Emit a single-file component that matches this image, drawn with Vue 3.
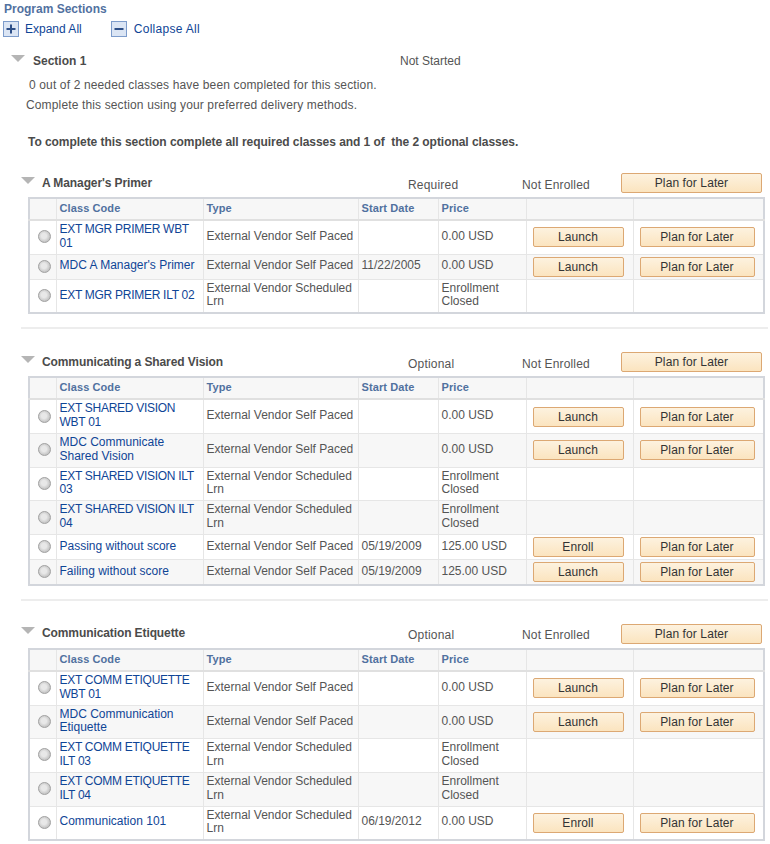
<script setup>
const blocks = [
  {
    title: "A Manager's Primer", need: 'Required',
    rows: [
      { code: 'EXT MGR PRIMER WBT 01', type: 'External Vendor Self Paced', date: '', price: '0.00 USD', action: 'Launch', plan: true },
      { code: "MDC A Manager's Primer", type: 'External Vendor Self Paced', date: '11/22/2005', price: '0.00 USD', action: 'Launch', plan: true },
      { code: 'EXT MGR PRIMER ILT 02', type: 'External Vendor Scheduled Lrn', date: '', price: 'Enrollment Closed' },
    ],
  },
  {
    title: 'Communicating a Shared Vision', need: 'Optional',
    rows: [
      { code: 'EXT SHARED VISION WBT 01', type: 'External Vendor Self Paced', date: '', price: '0.00 USD', action: 'Launch', plan: true },
      { code: 'MDC Communicate Shared Vision', type: 'External Vendor Self Paced', date: '', price: '0.00 USD', action: 'Launch', plan: true },
      { code: 'EXT SHARED VISION ILT 03', type: 'External Vendor Scheduled Lrn', date: '', price: 'Enrollment Closed' },
      { code: 'EXT SHARED VISION ILT 04', type: 'External Vendor Scheduled Lrn', date: '', price: 'Enrollment Closed' },
      { code: 'Passing without score', type: 'External Vendor Self Paced', date: '05/19/2009', price: '125.00 USD', action: 'Enroll', plan: true },
      { code: 'Failing without score', type: 'External Vendor Self Paced', date: '05/19/2009', price: '125.00 USD', action: 'Launch', plan: true },
    ],
  },
  {
    title: 'Communication Etiquette', need: 'Optional',
    rows: [
      { code: 'EXT COMM ETIQUETTE WBT 01', type: 'External Vendor Self Paced', date: '', price: '0.00 USD', action: 'Launch', plan: true },
      { code: 'MDC Communication Etiquette', type: 'External Vendor Self Paced', date: '', price: '0.00 USD', action: 'Launch', plan: true },
      { code: 'EXT COMM ETIQUETTE ILT 03', type: 'External Vendor Scheduled Lrn', date: '', price: 'Enrollment Closed' },
      { code: 'EXT COMM ETIQUETTE ILT 04', type: 'External Vendor Scheduled Lrn', date: '', price: 'Enrollment Closed' },
      { code: 'Communication 101', type: 'External Vendor Scheduled Lrn', date: '06/19/2012', price: '0.00 USD', action: 'Enroll', plan: true },
    ],
  },
]
</script>

<template>
  <div class="page">
    <h1 class="page-title">Program Sections</h1>
    <div class="expand-bar">
      <a class="tool">
        <svg class="tool-icon" viewBox="0 0 16 16"><rect x=".5" y=".5" width="15" height="15" fill="#dbe5f4" stroke="#7d9ccb" /><path d="M3.5 8h9M8 3.5v9" stroke="#2d4f88" stroke-width="2" /></svg>
        Expand All
      </a>
      <a class="tool collapse">
        <svg class="tool-icon" viewBox="0 0 16 16"><rect x=".5" y=".5" width="15" height="15" fill="#dbe5f4" stroke="#7d9ccb" /><path d="M3.5 8h9" stroke="#2d4f88" stroke-width="2" /></svg>
        Collapse All
      </a>
    </div>

    <div class="section-head">
      <span class="arrow"></span>
      <span class="section-name">Section 1</span>
      <span class="section-status">Not Started</span>
    </div>
    <p class="note first">0 out of 2 needed classes have been completed for this section.</p>
    <p class="note second">Complete this section using your preferred delivery methods.</p>
    <p class="rule-text">To complete this section complete all required classes and 1 of&nbsp; the 2 optional classes.</p>

    <section v-for="(block, i) in blocks" :key="block.title" class="block" :class="{ ruled: i < blocks.length - 1 }">
      <div class="block-head">
        <span class="arrow"></span>
        <span class="block-name">{{ block.title }}</span>
        <span class="block-need">{{ block.need }}</span>
        <span class="block-status">Not Enrolled</span>
        <button class="btn head-btn">Plan for Later</button>
      </div>
      <table class="grid">
        <colgroup>
          <col style="width: 27px" />
          <col style="width: 147px" />
          <col style="width: 155px" />
          <col style="width: 80px" />
          <col style="width: 88px" />
          <col style="width: 107px" />
          <col />
        </colgroup>
        <thead>
          <tr>
            <th></th>
            <th>Class Code</th>
            <th>Type</th>
            <th>Start Date</th>
            <th>Price</th>
            <th></th>
            <th></th>
          </tr>
        </thead>
        <tbody>
          <tr v-for="row in block.rows" :key="row.code">
            <td class="radio-cell"><span class="radio"></span></td>
            <td><a class="code" :class="{ caps: row.code.startsWith('EXT') }">{{ row.code }}</a></td>
            <td>{{ row.type }}</td>
            <td>{{ row.date }}</td>
            <td>{{ row.price }}</td>
            <td class="btn-cell"><button v-if="row.action" class="btn action-btn">{{ row.action }}</button></td>
            <td class="btn-cell"><button v-if="row.plan" class="btn plan-btn">Plan for Later</button></td>
          </tr>
        </tbody>
      </table>
    </section>
  </div>
</template>

<style>
html, body { background: #fff; }
</style>

<style scoped>
.page {
  width: 770px;
  height: 844px;
  overflow: hidden;
  box-sizing: border-box;
  padding: 2px 0 0 4px;
  font-family: "Liberation Sans", Arial, sans-serif;
  font-size: 12px;
  line-height: 14px;
  color: #555;
}
.page-title {
  margin: 0;
  font-size: 12px;
  line-height: 14px;
  font-weight: bold;
  color: #51719f;
}
.expand-bar {
  display: flex;
  gap: 29px;
  margin: 5px 0 0 -1px;
  height: 16px;
}
.tool {
  display: flex;
  align-items: center;
  gap: 6px;
  color: #0f4596;
}
.tool.collapse { gap: 7px; letter-spacing: .3px; }
.tool-icon { width: 16px; height: 16px; }
.section-head {
  display: flex;
  align-items: center;
  height: 14px;
  margin-top: 17px;
  padding-left: 7px;
}
.arrow {
  width: 0;
  height: 0;
  border-left: 7px solid transparent;
  border-right: 7px solid transparent;
  border-top: 7px solid #b5b5b5;
  margin-top: -6px;
}
.section-name {
  margin-left: 8px;
  width: 367px;
  font-weight: bold;
  color: #4b4b4b;
}
.note { margin: 0; letter-spacing: .14px; }
.note.first { margin: 10px 0 0 25px; }
.note.second { margin: 6px 0 0 22px; }
.rule-text {
  margin: 23px 0 0 24px;
  font-weight: bold;
  letter-spacing: -.05px;
  color: #4b4b4b;
}
.block { margin: 0 0 0 17px; width: 747px; }
.block:first-of-type { margin-top: 24px; }
.block.ruled {
  border-bottom: 2px solid #ededed;
  padding-bottom: 13px;
  margin-bottom: 23px;
}
.block-head {
  display: flex;
  align-items: center;
  height: 20px;
}
.block-name {
  margin: 0 0 1px 7px;
  width: 366px;
  font-weight: bold;
  letter-spacing: -.1px;
  color: #4b4b4b;
}
.block-need { width: 114px; margin-top: 3px; letter-spacing: .2px; }
.block-status { width: 99px; margin-top: 3px; letter-spacing: .15px; }
.btn {
  box-sizing: border-box;
  height: 20px;
  padding: 0;
  border: 1px solid #dca873;
  border-radius: 2px;
  background: linear-gradient(#fdf2df, #fbe4bf);
  font-family: inherit;
  font-size: 12px;
  letter-spacing: .1px;
  color: #333;
}
.head-btn { width: 141px; }
.action-btn { width: 91px; }
.plan-btn { width: 115px; }
.grid {
  box-sizing: border-box;
  width: 737px;
  margin: 4px 0 0 7px;
  table-layout: fixed;
  border-collapse: collapse;
  border: 2px solid #d3d6dc;
}
.grid th,
.grid td {
  border: 1px solid #e6e6e6;
  padding: 2px 2px 3px 3px;
  line-height: 13.83px;
  vertical-align: middle;
  text-align: left;
  font-weight: normal;
}
.grid th {
  padding-bottom: 4px;
  line-height: 14px;
  background: #f7f7f7;
  border-bottom: 2px solid #e0e0e0;
  font-size: 11px;
  font-weight: bold;
  letter-spacing: .1px;
  color: #51719f;
}
.grid tbody tr:nth-child(even) td { background: #f7f7f7; }
.code { color: #0f4596; }
.code.caps { letter-spacing: -.28px; }
.radio-cell { text-align: center !important; padding-right: 1px !important; padding-left: 4px !important; }
.radio {
  display: inline-block;
  box-sizing: border-box;
  width: 13px;
  height: 13px;
  border: 1px solid #a3a3a3;
  border-radius: 50%;
  background: radial-gradient(circle at 45% 45%, #e8e8e8 30%, #c0c0c0 75%, #dedede);
  vertical-align: middle;
}
.btn-cell { padding: 2px 0 2px 6px !important; }
</style>
